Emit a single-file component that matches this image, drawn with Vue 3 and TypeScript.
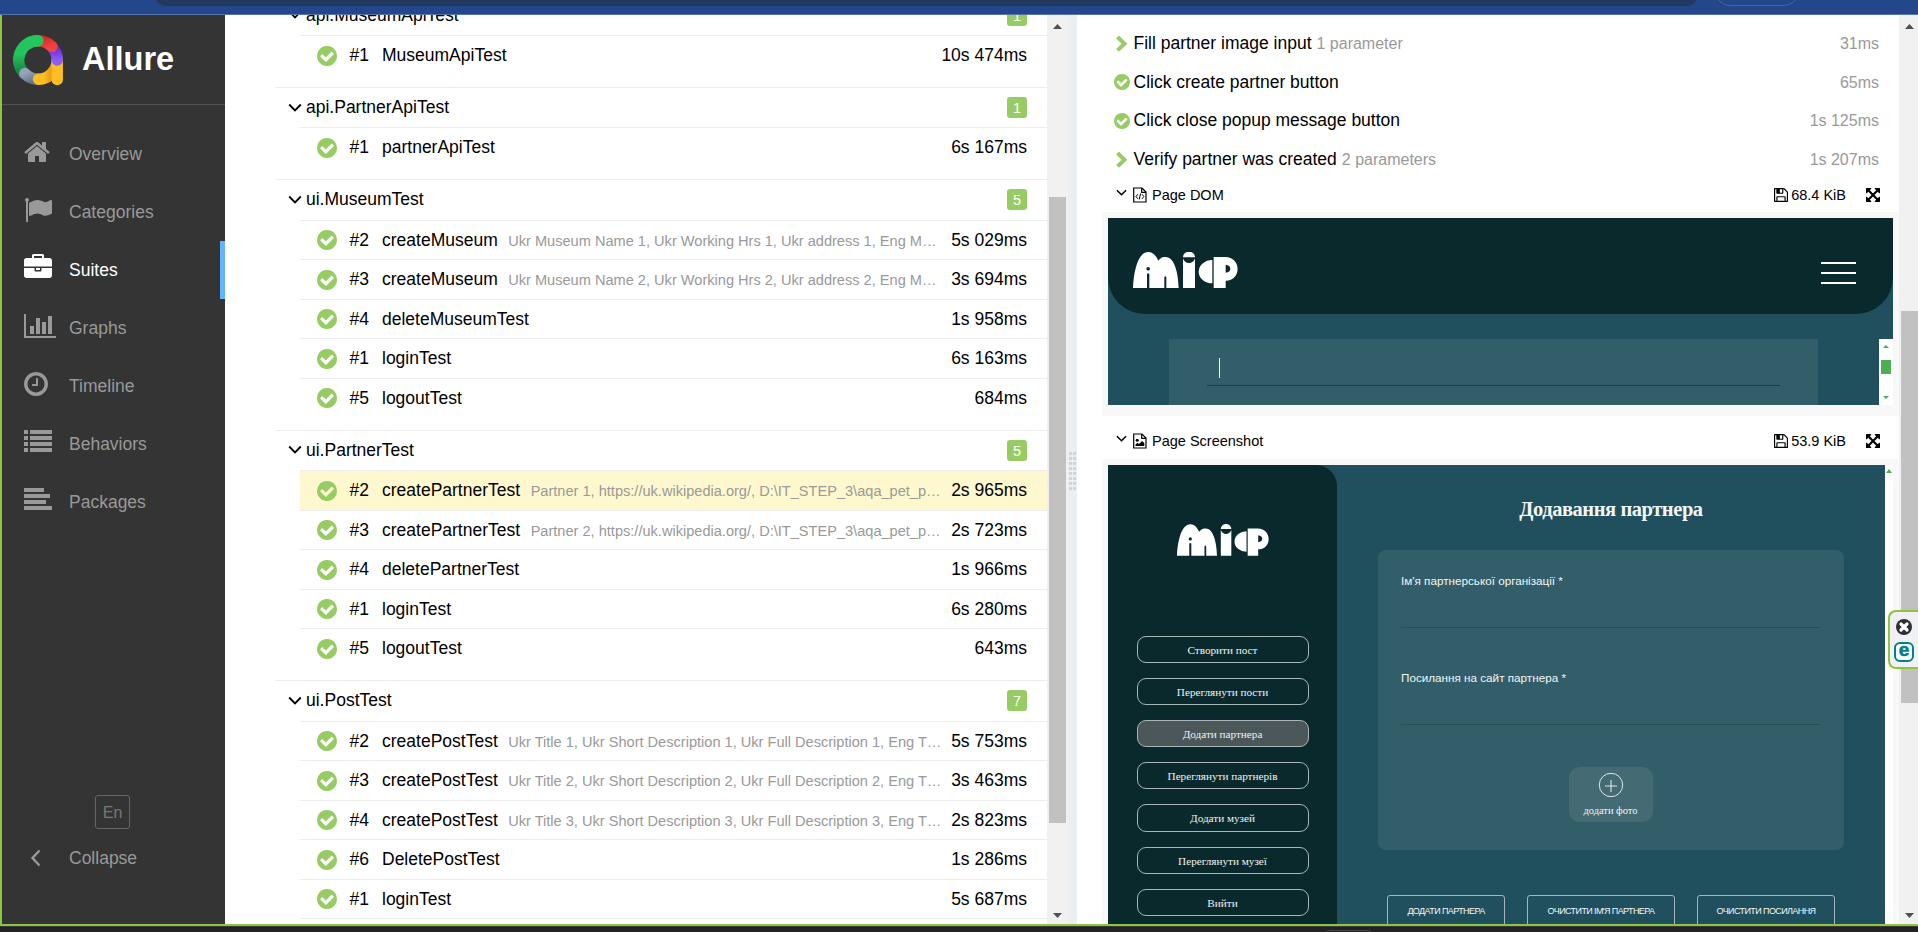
<script setup lang="ts">
interface NavItem { label: string; box: string; width: number; shift: number; path: string; active?: boolean }
interface TestRow { order: number; name: string; params?: string; time: string; selected?: boolean }
interface Suite { name: string; tests: TestRow[]; count: number }
interface Step { title: string; note?: string; time: string; expandable: boolean }

const checkPath = 'M1412 734q0-28-18-46l-91-90q-19-19-45-19t-45 19l-408 407-226-226q-19-19-45-19t-45 19l-91 90q-18 18-18 46 0 27 18 45l362 362q19 19 45 19 27 0 46-19l543-543q18-18 18-45zm252 162q0 209-103 385.5t-279.5 279.5-385.5 103-385.5-103-279.5-279.5-103-385.5 103-385.5 279.5-279.5 385.5-103 385.5 103 279.5 279.5 103 385.5z'
const floppyPath = 'M512 1536h768v-384h-768v384zm896 0h128v-896q0-14-10-38.5t-20-34.5l-281-281q-10-10-34-20t-39-10v416q0 40-28 68t-68 28h-576q-40 0-68-28t-28-68v-416h-128v1280h128v-416q0-40 28-68t68-28h832q40 0 68 28t28 68v416zm-384-928v-320q0-13-9.5-22.5t-22.5-9.5h-192q-13 0-22.5 9.5t-9.5 22.5v320q0 13 9.5 22.5t22.5 9.5h192q13 0 22.5-9.5t9.5-22.5zm640 32v928q0 40-28 68t-68 28h-1344q-40 0-68-28t-28-68v-1344q0-40 28-68t68-28h928q40 0 88 20t76 48l280 280q28 28 48 76t20 88z'
const expandPath = 'M1411 541l-355 355 355 355 144-144q29-31 70-14 39 17 39 59v448q0 26-19 45t-45 19h-448q-42 0-59-40-17-39 14-69l144-144-355-355-355 355 144 144q31 30 14 69-17 40-59 40h-448q-26 0-45-19t-19-45v-448q0-42 40-59 39-17 69 14l144 144 355-355-355-355-144 144q-19 19-45 19-12 0-24-5-40-17-40-59v-448q0-26 19-45t45-19h448q42 0 59 40 17 39-14 69l-144 144 355 355 355-355-144-144q-31-30-14-69 17-40 59-40h448q26 0 45 19t19 45v448q0 42-39 59-13 5-25 5-26 0-45-19z'
const mifPath = 'M0 108C2 60 14 0 46 0C62 0 70 14 76 26C84 16 90 15 98 15C124 15 136 62 137 108H100V76Q97 69 94 76V108H49V66Q45.500 62 42 66V108ZM45.500 45A5.500 5.500 0 1 0 45.500 56A5.500 5.500 0 1 0 45.500 45ZM150 16A18 17 0 0 1 186 16ZM150 19C154 38 182 38 186 19V108H150ZM238 24V94A41 35 0 0 1 238 24ZM242 15H276C326 15 326 86 278 86V108H242ZM278 38V62Q292 60 292 50T278 38Z'

const nav: NavItem[] = [
  { label: 'Overview', box: '0 0 1792 1792', width: 28, shift: -1, path: 'M1472 992v480q0 26-19 45t-45 19h-384v-384h-256v384h-384q-26 0-45-19t-19-45v-480q0-1 .5-3t.5-3l575-474 575 474q1 2 1 6zm223-69l-62 74q-8 9-21 11h-3q-13 0-21-7l-692-577-692 577q-12 8-24 7-13-2-21-11l-62-74q-8-10-7-23.5t11-21.5l719-599q32-26 76-26t76 26l244 204v-195q0-14 9-23t23-9h192q14 0 23 9t9 23v408l219 182q10 8 11 21.5t-7 23.5z' },
  { label: 'Categories', box: '0 0 1792 1792', width: 28, shift: 0, path: 'M320 256q0 72-64 110v1266q0 13-9.5 22.5t-22.5 9.5h-64q-13 0-22.5-9.5t-9.5-22.5v-1266q-64-38-64-110 0-53 37.5-90.5t90.500-37.5 90.500 37.5 37.500 90.500zm1472 64v763q0 25-12.500 38.500t-39.500 27.500q-215 116-369 116-61 0-123.500-22t-108.500-48-115.500-48-142.500-22q-192 0-464 146-17 9-33 9-26 0-45-19t-19-45v-742q0-32 31-55 21-14 79-43 236-120 421-120 107 0 200 29t219 88q38 19 88 19 54 0 117.500-21t110-47 88-47 54.500-21q26 0 45 19t19 45z' },
  { label: 'Suites', active: true, box: '0 0 1792 1792', width: 28, shift: 0, path: 'M640 256h512v-128h-512v128zm1152 640v480q0 66-47 113t-113 47h-1472q-66 0-113-47t-47-113v-480h672v160q0 26 19 45t45 19h320q26 0 45-19t19-45v-160h672zm-768 0v128h-256v-128h256zm768-480v384h-1792v-384q0-66 47-113t113-47h352v-160q0-40 28-68t68-28h576q40 0 68 28t28 68v160h352q66 0 113 47t47 113z' },
  { label: 'Graphs', box: '0 0 2048 1792', width: 32, shift: 0, path: 'M640 896v512h-256v-512h256zm384-512v1024h-256v-1024h256zm1024 1152v128h-2048v-1536h128v1408h1920zm-640-896v768h-256v-768h256zm384-384v1152h-256v-1152h256z' },
  { label: 'Timeline', box: '0 0 1792 1792', width: 28, shift: -2, path: 'M1024 544v448q0 14-9 23t-23 9h-320q-14 0-23-9t-9-23v-64q0-14 9-23t23-9h224v-352q0-14 9-23t23-9h64q14 0 23 9t9 23zm416 352q0-148-73-273t-198-198-273-73-273 73-198 198-73 273 73 273 198 198 273 73 273-73 198-198 73-273zm224 0q0 209-103 385.500t-279.500 279.500-385.500 103-385.500-103-279.500-279.500-103-385.500 103-385.500 279.500-279.500 385.500-103 385.500 103 279.500 279.500 103 385.500z' },
  { label: 'Behaviors', box: '0 0 1792 1792', width: 28, shift: 0, path: 'M0 128h256v256h-256zM384 128h1408v256h-1408zM0 512h256v256h-256zM384 512h1408v256h-1408zM0 896h256v256h-256zM384 896h1408v256h-1408zM0 1280h256v256h-256zM384 1280h1408v256h-1408z' },
  { label: 'Packages', box: '0 0 1792 1792', width: 28, shift: 0, path: 'M0 128h1280v256h-1280zM0 512h1664v256h-1664zM0 896h1408v256h-1408zM0 1280h1792v256h-1792z' },
]

const suites: Suite[] = [
  { name: 'api.MuseumApiTest', count: 1, tests: [{ order: 1, name: 'MuseumApiTest', time: '10s 474ms' }] },
  { name: 'api.PartnerApiTest', count: 1, tests: [{ order: 1, name: 'partnerApiTest', time: '6s 167ms' }] },
  {
    name: 'ui.MuseumTest', count: 5, tests: [
      { order: 2, name: 'createMuseum', params: 'Ukr Museum Name 1, Ukr Working Hrs 1, Ukr address 1, Eng M…', time: '5s 029ms' },
      { order: 3, name: 'createMuseum', params: 'Ukr Museum Name 2, Ukr Working Hrs 2, Ukr address 2, Eng M…', time: '3s 694ms' },
      { order: 4, name: 'deleteMuseumTest', time: '1s 958ms' },
      { order: 1, name: 'loginTest', time: '6s 163ms' },
      { order: 5, name: 'logoutTest', time: '684ms' },
    ],
  },
  {
    name: 'ui.PartnerTest', count: 5, tests: [
      { order: 2, name: 'createPartnerTest', params: 'Partner 1, https://uk.wikipedia.org/, D:\\IT_STEP_3\\aqa_pet_p…', time: '2s 965ms', selected: true },
      { order: 3, name: 'createPartnerTest', params: 'Partner 2, https://uk.wikipedia.org/, D:\\IT_STEP_3\\aqa_pet_p…', time: '2s 723ms' },
      { order: 4, name: 'deletePartnerTest', time: '1s 966ms' },
      { order: 1, name: 'loginTest', time: '6s 280ms' },
      { order: 5, name: 'logoutTest', time: '643ms' },
    ],
  },
  {
    name: 'ui.PostTest', count: 7, tests: [
      { order: 2, name: 'createPostTest', params: 'Ukr Title 1, Ukr Short Description 1, Ukr Full Description 1, Eng T…', time: '5s 753ms' },
      { order: 3, name: 'createPostTest', params: 'Ukr Title 2, Ukr Short Description 2, Ukr Full Description 2, Eng T…', time: '3s 463ms' },
      { order: 4, name: 'createPostTest', params: 'Ukr Title 3, Ukr Short Description 3, Ukr Full Description 3, Eng T…', time: '2s 823ms' },
      { order: 6, name: 'DeletePostTest', time: '1s 286ms' },
      { order: 1, name: 'loginTest', time: '5s 687ms' },
    ],
  },
]

const steps: Step[] = [
  { title: 'Fill partner image input', note: '1 parameter', time: '31ms', expandable: true },
  { title: 'Click create partner button', time: '65ms', expandable: false },
  { title: 'Click close popup message button', time: '1s 125ms', expandable: false },
  { title: 'Verify partner was created', note: '2 parameters', time: '1s 207ms', expandable: true },
]

const menu = ['Створити пост', 'Переглянути пости', 'Додати партнера', 'Переглянути партнерів', 'Додати музей', 'Переглянути музеї', 'Вийти']
const activeMenu = 2
</script>

<template>
  <div class="window">
    <div class="chrome"><div class="omnibox"></div><div class="pill"></div></div>

    <div class="main">
      <aside class="sidebar">
        <div class="brand">
          <svg class="brand-logo" viewBox="0 0 50 50" fill="none" stroke-width="11.500" stroke-linecap="round">
            <defs>
              <linearGradient id="lg-green" x1="0" y1="0" x2="0" y2="1"><stop offset="0.400" stop-color="#22c55e" /><stop offset="1" stop-color="#15803d" /></linearGradient>
              <linearGradient id="lg-gray" x1="0" y1="0" x2="1" y2="1"><stop offset="0" stop-color="#94a3b8" /><stop offset="1" stop-color="#64748b" /></linearGradient>
              <linearGradient id="lg-amber" x1="0" y1="0.500" x2="1" y2="0.500"><stop offset="0.300" stop-color="#fbbf24" /><stop offset="1" stop-color="#d97706" /></linearGradient>
              <linearGradient id="lg-violet" x1="0" y1="0" x2="0" y2="1"><stop offset="0" stop-color="#6d28d9" /><stop offset="1" stop-color="#8b5cf6" /></linearGradient>
              <linearGradient id="lg-red" x1="0" y1="0" x2="1" y2="1"><stop offset="0" stop-color="#dc2626" /><stop offset="1" stop-color="#ef4444" /></linearGradient>
            </defs>
            <path d="M11.400 38.600A19.200 19.200 0 0 1 25 5.800" stroke="url(#lg-green)" />
            <path d="M25 44.200A19.200 19.200 0 0 1 11.800 38.600" stroke="url(#lg-gray)" />
            <path d="M44.200 25A19.200 19.200 0 0 1 25.500 44.200" stroke="url(#lg-amber)" />
            <path d="M44.200 28V44.500" stroke="#fbbf24" />
            <path d="M39.500 12.500A19.200 19.200 0 0 1 44.200 25" stroke="url(#lg-violet)" />
            <path d="M25 5.800A19.200 19.200 0 0 1 38.800 11.600" stroke="url(#lg-red)" />
            <path d="M14 9.300A19.200 19.200 0 0 1 25 5.800" stroke="#22c55e" />
          </svg>
          <span>Allure</span>
        </div>
        <nav class="nav">
          <div v-for="item in nav" :key="item.label" class="nav-item" :class="{ active: item.active }">
            <div class="nav-icon">
              <svg :viewBox="item.box" :width="item.width" height="28" :style="{ marginLeft: item.shift + 'px' }"><path :d="item.path" fill="currentColor" /></svg>
            </div>
            <span>{{ item.label }}</span>
          </div>
        </nav>
        <div class="side-footer">
          <div class="lang">En</div>
          <div class="collapse">
            <svg width="46" height="20" viewBox="0 0 46 20"><path d="M16.500 2.500L9.500 10L16.500 17.500" fill="none" stroke="#999" stroke-width="2.400" /></svg>
            <span>Collapse</span>
          </div>
        </div>
      </aside>

      <section class="tree">
        <div v-for="suite in suites" :key="suite.name" class="suite">
          <div class="suite-head">
            <svg class="suite-arrow" width="14" height="10" viewBox="0 0 14 10"><path d="M1.200 1.500L7 7.500L12.800 1.500" fill="none" stroke="#000" stroke-width="1.800" /></svg>
            <span>{{ suite.name }}</span>
            <b class="count">{{ suite.count }}</b>
          </div>
          <div v-for="test in suite.tests" :key="test.order" class="test" :class="{ selected: test.selected }">
            <svg class="ok" viewBox="128 128 1536 1536"><path :d="checkPath" fill="#97cc64" /></svg>
            <span class="order">#{{ test.order }}</span>
            <span>{{ test.name }}</span>
            <span v-if="test.params" class="params">{{ test.params }}</span>
            <span class="time">{{ test.time }}</span>
          </div>
        </div>
      </section>

      <div class="scroll">
        <svg class="tri" viewBox="0 0 9 5"><path d="M4.500 0L9 5H0z" fill="#505050" /></svg>
        <div class="thumb tree-thumb"></div>
        <svg class="tri bottom" viewBox="0 0 9 5"><path d="M4.500 5L9 0H0z" fill="#505050" /></svg>
      </div>
      <div class="gutter"><i v-for="n in 16" :key="n"></i></div>

      <section class="details">
        <div class="steps">
          <div v-for="step in steps" :key="step.title" class="step">
            <svg v-if="step.expandable" class="step-icon" viewBox="0 0 16 16"><path d="M3.500 1L10.500 7.700L3.500 14.400" fill="none" stroke="#97cc64" stroke-width="4" /></svg>
            <svg v-else class="step-icon" viewBox="128 128 1536 1536"><path :d="checkPath" fill="#97cc64" /></svg>
            <div class="step-text"><span>{{ step.title }}</span><small v-if="step.note">{{ step.note }}</small><small class="step-time">{{ step.time }}</small></div>
          </div>
        </div>

        <div class="attachment">
          <svg class="att-arrow" viewBox="0 0 12 8"><path d="M1 1L6 6L11 1" fill="none" stroke="#000" stroke-width="1.600" /></svg>
          <svg class="att-file" viewBox="0 0 14 16" fill="none" stroke="#000" stroke-width="1.200"><path d="M.7 1H9L13 5V15H.7zM8.700 1V5.300H13" /><path d="M4.800 7.200L3 9.500L4.800 11.800M9 7.200L10.800 9.500L9 11.800M7.600 6.500L6.200 12.500" stroke-width="1" /></svg>
          <span>Page DOM</span>
          <div class="att-actions">
            <svg width="14" height="14" viewBox="128 128 1536 1536"><path :d="floppyPath" /></svg><span>68.4 KiB</span>
            <svg class="full" width="14" height="14" viewBox="128 128 1536 1536"><path :d="expandPath" /></svg>
          </div>
        </div>
        <div class="frame frame-dom">
          <div class="dom-page">
            <header class="dom-header">
              <svg width="105" height="36" viewBox="0 0 315 108"><path :d="mifPath" fill="#fff" fill-rule="evenodd" /></svg>
              <div class="burger"><i></i><i></i><i></i></div>
            </header>
            <div class="dom-body">
              <div class="dom-panel"><div class="dom-input"><i class="caret"></i></div></div>
              <div class="dom-scroll">
                <svg width="6" height="3" viewBox="0 0 6 3"><path d="M3 0L6 3H0z" fill="#4caf50" /></svg>
                <div class="dom-thumb"></div>
                <svg class="dom-down" width="6" height="3" viewBox="0 0 6 3"><path d="M3 3L6 0H0z" fill="#4caf50" /></svg>
              </div>
            </div>
          </div>
        </div>

        <div class="attachment second">
          <svg class="att-arrow" viewBox="0 0 12 8"><path d="M1 1L6 6L11 1" fill="none" stroke="#000" stroke-width="1.600" /></svg>
          <svg class="att-file" viewBox="0 0 14 16"><path d="M.7 1H9L13 5V15H.7zM8.700 1V5.300H13" fill="none" stroke="#000" stroke-width="1.200" /><circle cx="4.200" cy="7.300" r="1.500" /><path d="M2.500 13V11.500L4.500 9.800L6 11L9 8L11.300 10V13z" /></svg>
          <span>Page Screenshot</span>
          <div class="att-actions">
            <svg width="14" height="14" viewBox="128 128 1536 1536"><path :d="floppyPath" /></svg><span>53.9 KiB</span>
            <svg class="full" width="14" height="14" viewBox="128 128 1536 1536"><path :d="expandPath" /></svg>
          </div>
        </div>
        <div class="frame frame-shot">
          <div class="shot">
            <div class="shot-side">
              <svg width="92" height="32" viewBox="0 0 315 108"><path :d="mifPath" fill="#fff" fill-rule="evenodd" /></svg>
              <div class="menu">
                <div v-for="(label, i) in menu" :key="label" class="menu-btn" :class="{ on: i === activeMenu }">{{ label }}</div>
              </div>
            </div>
            <div class="shot-main">
              <h1>Додавання партнера</h1>
              <div class="card">
                <div class="field"><span>Ім'я партнерської організації *</span></div>
                <div class="field two"><span>Посилання на сайт партнера *</span></div>
                <div class="photo">
                  <svg width="26" height="26" viewBox="0 0 26 26" fill="none" stroke="#dfe8ea"><circle cx="13" cy="13" r="11.700" stroke-width="1" /><path d="M7 14H19M13 8V20" stroke-width="1.100" /></svg>
                  <span>додати фото</span>
                </div>
              </div>
              <div class="actions">
                <div class="act a1">ДОДАТИ ПАРТНЕРА</div>
                <div class="act a2">ОЧИСТИТИ ІМ'Я ПАРТНЕРА</div>
                <div class="act a3">ОЧИСТИТИ ПОСИЛАННЯ</div>
              </div>
            </div>
            <div class="shot-scroll"><svg width="6" height="4" viewBox="0 0 6 4"><path d="M3 0L6 4H0z" fill="#4caf50" /></svg></div>
          </div>
        </div>
      </section>

      <div class="scroll page-scroll">
        <svg class="tri" viewBox="0 0 9 5"><path d="M4.500 0L9 5H0z" fill="#505050" /></svg>
        <div class="thumb page-thumb"></div>
        <svg class="tri bottom" viewBox="0 0 9 5"><path d="M4.500 5L9 0H0z" fill="#505050" /></svg>
      </div>
    </div>

    <div class="taskbar"><i></i></div>

    <div class="widget">
      <svg width="16" height="16" viewBox="0 0 16 16"><circle cx="8" cy="8" r="8" fill="#2b2f38" /><path d="M5 5L11 11M11 5L5 11" stroke="#fff" stroke-width="3.200" stroke-linecap="round" /></svg>
      <div class="eset">e</div>
    </div>
  </div>
</template>

<style>
body { margin: 0; overflow: hidden; }
</style>

<style scoped>
.window { position: relative; width: 1918px; height: 932px; overflow: hidden; display: flex; flex-direction: column; font-family: "Liberation Sans", Arial, sans-serif; font-size: 17.500px; color: #000; background: #fff; }
.window * { box-sizing: border-box; }
svg { display: block; flex: none; }
.chrome { height: 15px; flex: none; background: #24468a; border-bottom: 1px solid #5674aa; display: flex; overflow: hidden; }
.omnibox { width: 1545px; height: 26px; margin: -20px 0 0 154px; border-radius: 13px; background: #243862; }
.pill { width: 84px; height: 30px; margin: -24px 0 0 16px; border-radius: 15px; border: 1px solid #47649d; }
.main { height: 911px; flex: none; display: flex; border-left: 2px solid #8cc63f; border-bottom: 2px solid #8cc63f; overflow: hidden; }
.taskbar { flex: 1; background: #242323; border-top: 1px solid #3a3a3c; overflow: hidden; }
.taskbar i { display: block; width: 47px; height: 8px; margin: 3px 0 0 1325px; border: 1px solid #444; border-radius: 4px; }

.sidebar { width: 223px; flex: none; background: #343434; color: #999; display: flex; flex-direction: column; }
.brand { height: 90px; flex: none; border-bottom: 1px solid #515151; display: flex; align-items: center; padding: 0 0 0 11px; color: #fff; font-size: 32.500px; font-weight: bold; }
.brand-logo { width: 50px; height: 50px; margin: 1px 19px 0 0; overflow: visible; }
.nav { padding-top: 20px; }
.nav-item { height: 58px; display: flex; align-items: flex-start; border-right: 5px solid transparent; }
.nav-icon { width: 67px; padding: 13px 0 0 22px; flex: none; }
.nav-item span { line-height: 58px; }
.nav-item.active { color: #fff; border-right-color: #61b6fb; }
.side-footer { margin-top: auto; height: 129px; display: flex; flex-direction: column; align-items: flex-start; }
.lang { width: 35px; height: 34px; margin-left: 93px; border: 1px solid #666; border-radius: 3px; font-size: 16px; line-height: 34px; text-align: center; color: #777; }
.collapse { display: flex; align-items: center; padding-left: 21px; margin-top: 19px; }
.collapse span { line-height: 20px; }

.tree { width: 822px; flex: none; padding-left: 50px; overflow: hidden; }
.suite { border-top: 1px solid #eceeef; padding-bottom: 12.450px; white-space: nowrap; }
.suite:first-child { margin-top: -20.300px; }
.suite:last-child { padding-bottom: 0; }
.suite:last-child .test:last-child { height: 40.500px; border-bottom: 1px solid #eceeef; }
.suite-head { height: 39.300px; display: flex; align-items: center; padding: 0 20px 0 12.500px; }
.suite-arrow { margin-right: 4.500px; }
.count { margin-left: auto; width: 20px; height: 21px; border-radius: 3px; background: #97cc64; color: #fff; font-size: 14.500px; font-weight: normal; line-height: 22px; text-align: center; }
.test { height: 39.550px; margin-left: 25px; padding: 0 20px 0 17px; border-top: 1px solid #eceeef; display: flex; align-items: baseline; line-height: 38px; }
.test.selected { background: #fff8ce; }
.ok { width: 20px; height: 20px; margin-right: 12.500px; align-self: flex-start; margin-top: 9.500px; }
.order { width: 32.500px; flex: none; }
.params { font-size: 14.580px; color: #999; margin-left: 10.500px; }
.time { margin-left: auto; }

.scroll { width: 21px; flex: none; background: #f1f1f1; display: flex; flex-direction: column; padding: 9px 0 6px 2px; }
.tri { width: 9px; height: 5px; margin-left: 4px; }
.tri.bottom { margin-top: auto; }
.thumb { background: #c1c1c1; width: 17px; }
.tree-thumb { height: 626px; margin-top: 168px; }
.page-scroll { width: 19px; }
.page-thumb { height: 392px; margin-top: 282px; }
.gutter { width: 9px; flex: none; background: #eceff1; display: grid; grid-template-columns: 3px 3px; grid-auto-rows: 3px; gap: 2px 1px; padding: 437px 0 0 1px; align-content: start; }
.gutter i { background: #d2d5d7; }

.details { width: 822px; flex: none; overflow: hidden; padding-top: 9.500px; }
.steps { height: 153.500px; }
.step { height: 38.600px; display: flex; padding: 0 20px 0 37px; align-items: center; }
.step-icon { width: 16px; height: 16px; margin: 0 3.500px 0 0; }
.step-text { flex: 1; display: flex; align-items: baseline; }
.step-text small { font-size: 16px; color: #999; margin-left: 5px; }
.step-text .step-time { margin-left: auto; }
.attachment { height: 34px; display: flex; align-items: center; padding: 0 19px 0 39px; font-size: 14.500px; }
.attachment.second { height: 43px; padding-top: 7px; }
.att-arrow { width: 11px; height: 8px; margin: 0 6px 4px 0; }
.att-file { width: 14px; height: 16px; margin-right: 5px; }
.att-actions { margin-left: auto; display: flex; align-items: center; gap: 3px; }
.full { margin-left: 17px; }
.frame { margin-left: 25px; padding: 6px 6px 0; background: #f8f8f8; }
.frame-dom { height: 204px; }
.dom-page { height: 187px; background: #20505d; overflow: hidden; }
.dom-header { height: 96px; background: #0a292c; border-radius: 0 0 37px 37px; display: flex; align-items: center; justify-content: space-between; padding: 8px 37px 0 25px; }
.burger { display: grid; gap: 8px; margin-top: 6px; }
.burger i { width: 35px; height: 2px; background: #fff; }
.dom-body { margin-top: 25px; height: 66px; display: flex; justify-content: space-between; padding-left: 61px; }
.dom-panel { width: 649px; background: #325e69; padding: 0 38px; }
.dom-input { height: 47px; border-bottom: 1px solid #1b3d45; padding: 19px 0 0 12px; }
.caret { display: block; width: 1px; height: 20px; background: #fff; }
.dom-scroll { width: 14px; background: #fff; display: flex; flex-direction: column; align-items: center; padding: 6px 0; }
.dom-thumb { width: 10px; height: 14px; margin-top: 12px; background: #4caf50; }
.dom-down { margin-top: auto; }

.frame-shot { height: 470px; }
.shot { height: 470px; display: flex; background: #20505d; }
.shot-side { width: 229px; flex: none; background: #0a292c; border-radius: 0 21px 0 0; padding-top: 59px; }
.shot-side > svg { margin-left: 69px; }
.menu { margin: 80px 28.500px 0 28.500px; display: grid; gap: 15px; }
.menu-btn { height: 27.120px; border: 1px solid #a9b6b8; border-radius: 9px; text-align: center; font-family: "Liberation Serif", serif; font-size: 11.200px; line-height: 27px; color: #eef2f2; }
.menu-btn.on { background: #4b5759; }
.shot-main { flex: 1; padding: 0 41px; display: flex; flex-direction: column; color: #f3f6f7; }
h1 { margin: 31px 0 0; height: 54px; line-height: 26px; font-family: "Liberation Serif", serif; font-size: 20.500px; letter-spacing: -.45px; font-weight: bold; text-align: center; }
.card { height: 300px; flex: none; border-radius: 8px; background: #325e69; padding: 0 24px 0 23px; display: flex; flex-direction: column; }
.field { height: 78px; flex: none; border-bottom: 1px solid #284f58; padding-top: 23px; font-size: 11.700px; line-height: 16px; }
.field.two { height: 97px; padding-top: 42px; }
.photo { width: 84px; height: 55px; margin: 42px auto 0; border-radius: 11px; background: #446a73; display: flex; flex-direction: column; align-items: center; padding-top: 5px; font-family: "Liberation Serif", serif; font-size: 10.400px; line-height: 12px; }
.photo span { margin-top: 7px; white-space: nowrap; }
.actions { margin-top: 45px; display: flex; padding-left: 9px; }
.act { height: 40px; border: 1px solid #a3b6bb; border-radius: 3px 3px 0 0; font-size: 9px; letter-spacing: -.6px; line-height: 31px; text-align: center; white-space: nowrap; flex: none; }
.a1 { width: 118px; }
.a2 { width: 148px; margin-left: 22px; }
.a3 { width: 138px; margin-left: 22px; }
.shot-scroll { width: 8px; background: #fff; padding: 4px 0 0 1px; }

.widget { position: absolute; left: 1888px; top: 610px; width: 32px; height: 59px; border: 2px solid #8cc63f; border-right: 0; border-radius: 8px 0 0 8px; background: #f1f1f4; padding: 7px 0 0 6px; }
.eset { width: 20px; height: 20px; margin: 7px 0 0 -2px; border: 2px solid #00808a; border-radius: 6px; background: #fff; color: #00808a; font-size: 19px; line-height: 12px; font-weight: bold; text-align: center; -webkit-text-stroke: .6px #00808a; }
</style>
